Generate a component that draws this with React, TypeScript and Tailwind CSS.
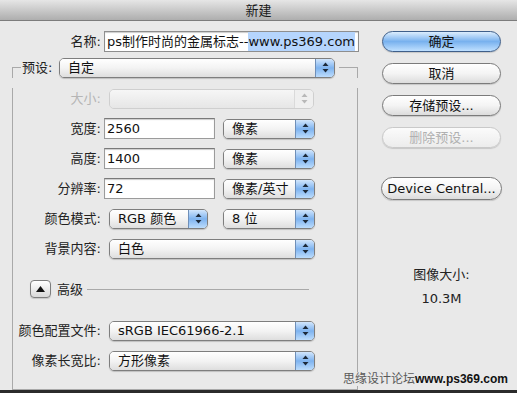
import type { ReactNode } from 'react';

function Arrows({ disabled = false }: { disabled?: boolean }) {
  const fill = disabled ? '#b8b8b8' : '#1d2a3a';
  return (
    <svg width="7" height="11" viewBox="0 0 7 11">
      <polygon points="3.5,0.5 6.5,4 0.5,4" fill={fill} />
      <polygon points="0.5,7 6.5,7 3.5,10.5" fill={fill} />
    </svg>
  );
}

function Popup({
  width,
  children,
  disabled = false,
}: {
  width: string;
  children?: ReactNode;
  disabled?: boolean;
}) {
  return (
    <div
      className={`flex h-[20px] ${width} items-stretch overflow-hidden rounded-[5px] border ${
        disabled
          ? 'border-[#cfcfcf]'
          : 'border-[#7e7e7e] shadow-[0_1px_1px_rgba(0,0,0,0.18)]'
      }`}
    >
      <div
        className={`flex flex-1 items-center whitespace-nowrap pl-[8px] ${
          disabled
            ? 'bg-gradient-to-b from-[#f6f6f6] to-[#e6e6e6]'
            : 'bg-gradient-to-b from-white via-[#f3f3f3] to-[#dedede] text-[#111]'
        }`}
      >
        {children}
      </div>
      <div
        className={`flex w-[19px] items-center justify-center border-l ${
          disabled
            ? 'border-[#dadada] bg-[#efefef]'
            : 'border-[#6f8fb8] bg-gradient-to-b from-[#d2e6fc] via-[#7eb3ef] to-[#bcdcfc]'
        }`}
      >
        <Arrows disabled={disabled} />
      </div>
    </div>
  );
}

function Field({ width, value }: { width: string; value: string }) {
  return (
    <div
      className={`flex h-[21px] ${width} items-center border border-[#9b9b9b] border-t-[#7a7a7a] bg-white pl-[2px] text-[#111] shadow-[inset_0_1px_1px_rgba(0,0,0,0.2)]`}
    >
      {value}
    </div>
  );
}

function Row({
  label,
  children,
  className = '',
  disabled = false,
}: {
  label: string;
  children: ReactNode;
  className?: string;
  disabled?: boolean;
}) {
  return (
    <div className={`flex h-[21px] items-center ${className}`}>
      <div
        className={`w-[88px] shrink-0 whitespace-nowrap text-right ${
          disabled ? 'text-[#b5b5b5]' : 'text-[#222]'
        }`}
      >
        {label}
      </div>
      {children}
    </div>
  );
}

function PillButton({
  children,
  primary = false,
  disabled = false,
  className = '',
}: {
  children: ReactNode;
  primary?: boolean;
  disabled?: boolean;
  className?: string;
}) {
  return (
    <div
      className={`flex items-center justify-center whitespace-nowrap rounded-full border ${
        primary
          ? 'border-[#3f5f8a] bg-gradient-to-b from-[#dcedfd] via-[#78b1ee] to-[#bfe0ff] text-[#111]'
          : disabled
            ? 'border-[#c9c9c9] bg-gradient-to-b from-[#fbfbfb] to-[#ececec] text-[#b0b0b0]'
            : 'border-[#7b7b7b] bg-gradient-to-b from-white via-[#f4f4f4] to-[#dcdcdc] text-[#111]'
      } shadow-[0_1px_1px_rgba(0,0,0,0.15)] ${className}`}
    >
      {children}
    </div>
  );
}

export default function App() {
  return (
    <div className="relative flex h-[393px] w-[517px] flex-col overflow-hidden bg-[#e9e9e9] font-['DejaVu_Sans','Noto_Sans_CJK_SC',sans-serif] text-[13px] leading-none">
      <div className="flex h-[21px] shrink-0 items-center justify-center border-b border-[#7c7c7c] bg-gradient-to-b from-[#e6e6e6] to-[#aeaeae] text-[#1a1a1a]">
        新建
      </div>

      <div className="flex flex-1">
        <div className="w-[360px] shrink-0 pt-[10px]">
          <div className="flex h-[21px] items-center">
            <div className="w-[101px] text-right text-[#222]">名称:</div>
            <div className="ml-[3px] flex h-[21px] w-[255px] items-center whitespace-nowrap border border-[#8e8e8e] bg-white pl-[2px] text-[#111] shadow-[inset_0_1px_1px_rgba(0,0,0,0.2)]">
              <span>ps制作时尚的金属标志--</span>
              <span className="bg-[#b5d5fd] py-[3px]">www.ps369.com</span>
            </div>
          </div>

          <div className="ml-[12px] mt-[5px] w-[346px]">
            <div className="flex h-[21px] items-center">
              <div className="h-[11px] w-[9px] self-end border-l border-t border-[#a9a9a9]" />
              <div className="w-[38px] pl-[1px] text-[#222]">预设:</div>
              <Popup width="w-[276px]">自定</Popup>
              <div className="ml-[4px] h-[11px] flex-1 self-end border-r border-t border-[#a9a9a9]" />
            </div>

            <div className="h-[302px] border-b border-l border-r border-[#a9a9a9]">
              <Row label="大小:" className="mt-[10px]" disabled>
                <div className="ml-[8px]">
                  <Popup width="w-[205px]" disabled />
                </div>
              </Row>

              <Row label="宽度:" className="mt-[9px]">
                <div className="ml-[3px]">
                  <Field width="w-[111px]" value="2560" />
                </div>
                <div className="ml-[8px]">
                  <Popup width="w-[92px]">像素</Popup>
                </div>
              </Row>

              <Row label="高度:" className="mt-[9px]">
                <div className="ml-[3px]">
                  <Field width="w-[111px]" value="1400" />
                </div>
                <div className="ml-[8px]">
                  <Popup width="w-[92px]">像素</Popup>
                </div>
              </Row>

              <Row label="分辨率:" className="mt-[9px]">
                <div className="ml-[3px]">
                  <Field width="w-[111px]" value="72" />
                </div>
                <div className="ml-[8px]">
                  <Popup width="w-[92px]">像素/英寸</Popup>
                </div>
              </Row>

              <Row label="颜色模式:" className="mt-[9px]">
                <div className="ml-[8px]">
                  <Popup width="w-[99px]">RGB 颜色</Popup>
                </div>
                <div className="ml-[15px]">
                  <Popup width="w-[92px]">8 位</Popup>
                </div>
              </Row>

              <Row label="背景内容:" className="mt-[9px]">
                <div className="ml-[8px]">
                  <Popup width="w-[206px]">白色</Popup>
                </div>
              </Row>

              <div className="ml-[17px] mt-[20px] flex h-[20px] items-center">
                <div className="flex h-[18px] w-[21px] items-center justify-center rounded-[4px] border border-[#7d7d7d] bg-gradient-to-b from-white to-[#d8d8d8] shadow-[0_1px_1px_rgba(0,0,0,0.15)]">
                  <svg width="9" height="6" viewBox="0 0 9 6">
                    <polygon points="4.5,0 9,6 0,6" fill="#111" />
                  </svg>
                </div>
                <div className="ml-[6px] text-[#222]">高级</div>
                <div className="ml-[4px] h-0 w-[222px] border-t border-[#a9a9a9]" />
              </div>

              <Row label="颜色配置文件:" className="mt-[21px]">
                <div className="ml-[8px]">
                  <Popup width="w-[206px]">sRGB IEC61966-2.1</Popup>
                </div>
              </Row>

              <Row label="像素长宽比:" className="mt-[9px]">
                <div className="ml-[8px]">
                  <Popup width="w-[206px]">方形像素</Popup>
                </div>
              </Row>
            </div>
          </div>
        </div>

        <div className="flex w-[157px] flex-col pt-[10px]">
          <PillButton primary className="ml-[22px] h-[21px] w-[119px]">
            确定
          </PillButton>
          <PillButton className="ml-[22px] mt-[11px] h-[21px] w-[119px]">
            取消
          </PillButton>
          <PillButton className="ml-[22px] mt-[11px] h-[21px] w-[119px]">
            存储预设...
          </PillButton>
          <PillButton disabled className="ml-[22px] mt-[11px] h-[21px] w-[119px]">
            删除预设...
          </PillButton>
          <PillButton className="ml-[21px] mt-[29px] h-[23px] w-[121px]">
            Device Central...
          </PillButton>

          <div className="ml-[22px] mt-[68px] w-[119px] text-center text-[#222]">
            图像大小:
          </div>
          <div className="ml-[22px] mt-[11px] w-[119px] text-center text-[#222]">
            10.3M
          </div>
        </div>
      </div>

      <div className="h-[4px] shrink-0 bg-[#2b2b2b]" />

      <div className="absolute left-[343px] top-[372px] flex items-center whitespace-nowrap bg-[#e9e9e9] pr-[2px] text-[12px] leading-[14px]">
        <span className="text-[#5a5a5a]">思缘设计论坛</span>
        <span className="font-['Liberation_Sans',sans-serif] font-bold text-[#111]">
          www.ps369.com
        </span>
      </div>
    </div>
  );
}
